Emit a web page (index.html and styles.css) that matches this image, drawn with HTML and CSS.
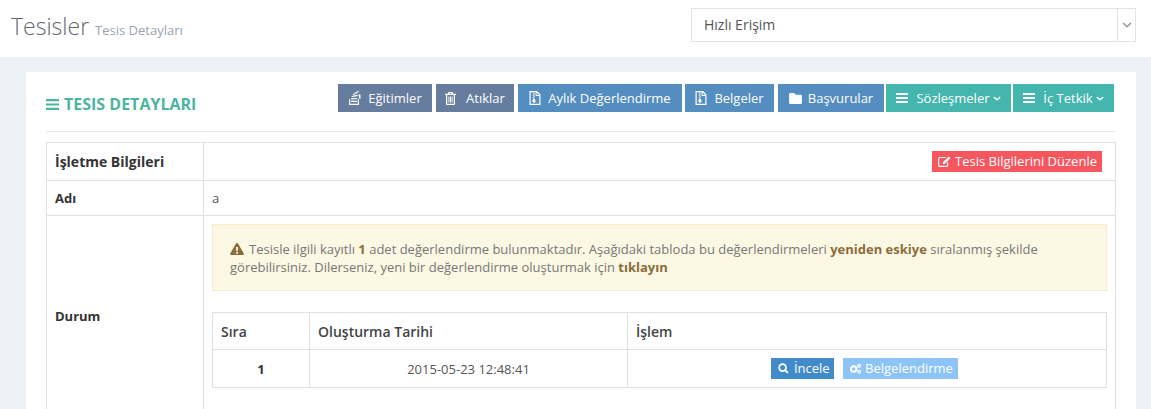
FILE: index.html
```html
<!DOCTYPE html>
<html lang="tr">
<head>
<meta charset="utf-8">
<title>Tesisler</title>
<link rel="stylesheet" href="styles.css">
</head>
<body>
<svg class="defs" width="0" height="0" aria-hidden="true">
  <symbol id="bars" viewBox="0 0 12 10"><path d="M0 0h12v2H0zM0 4h12v2H0zM0 8h12v2H0z"/></symbol>
  <symbol id="file" viewBox="0 0 12 14"><path fill-rule="evenodd" d="M.5 0h7.500l3.500 3.500V14H.5zM1.700 1.200v11.600h8.600V5H6.600V1.200zM7.600 1.400V4h2.600zM3.800 1.400h1.100v1.100H3.800zM4.900 2.500H6v1.100H4.900zM3.800 3.600h1.100v1.100H3.800zM4.900 4.700H6v1.100H4.900zM3.800 5.800h1.100v1.100H3.800zM3.900 7.500h2.100l.6 3.200-1.650 1.300-1.650-1.300z"/></symbol>
  <symbol id="chev" viewBox="0 0 10 6"><path d="M1 1l4 3.600L9 1" fill="none" stroke="currentColor" stroke-width="1.600"/></symbol>
</svg>
<header class="topbar">
  <h1 class="page-title">Tesisler <small class="page-sub">Tesis Detayları</small></h1>
  <div class="quick">
    <span class="quick-text">Hızlı Erişim</span>
    <span class="quick-arrow"><svg class="quick-chev"><use href="#chev"/></svg></span>
  </div>
</header>
<main class="content">
  <section class="card">
    <div class="card-head">
      <h2 class="card-title"><svg class="title-icon"><use href="#bars"/></svg>TESIS DETAYLARI</h2>
      <div class="toolbar">
        <a class="btn slate w-egitim">
          <svg class="ic ic-stack" viewBox="0 0 13 14"><path fill-rule="evenodd" d="M1 8h1.200v4.800h7.600V8H11v6H1zM3 9.800h6V11H3zM3.100 7.300l6-.4.100 1.200-6 .4zM3.600 5l5.800-1.200.3 1.200-5.800 1.200zM4.800 3l5.300-2.300.5 1.100-5.300 2.300zM6.800 1.300L10.500 0l.5 1-3.800 1.400zM10.500 3.500l1.800-.3.400 4.300-1.500.2z"/></svg>Eğitimler</a>
        <a class="btn slate w-atik">
          <svg class="ic ic-trash" viewBox="0 0 11 13"><path fill-rule="evenodd" d="M3.500 0h4l.8 1.800H11V3H10v9a1 1 0 0 1-1 1H2a1 1 0 0 1-1-1V3H0V1.800h2.700zM4.600 1.100l-.3.700h2.400l-.3-.7zM2.200 3v8.800h6.600V3zM3.400 4.500h1v6h-1zM5 4.500h1v6H5zM6.600 4.500h1v6h-1z"/></svg>Atıklar</a>
        <a class="btn blue w-aylik"><svg class="ic ic-file"><use href="#file"/></svg>Aylık Değerlendirme</a>
        <a class="btn blue w-belge"><svg class="ic ic-file"><use href="#file"/></svg>Belgeler</a>
        <a class="btn blue w-basvuru">
          <svg class="ic ic-folder" viewBox="0 0 14 12"><path d="M1.500 0h4l1.500 1.800h5.500A1.500 1.500 0 0 1 14 3.300v7.200a1.500 1.500 0 0 1-1.500 1.500h-11A1.500 1.500 0 0 1 0 10.500v-9A1.500 1.500 0 0 1 1.500 0z"/></svg>Başvurular</a>
        <a class="btn teal w-sozlesme"><svg class="ic ic-bars"><use href="#bars"/></svg>Sözleşmeler<svg class="chev"><use href="#chev"/></svg></a>
        <a class="btn teal w-tetkik"><svg class="ic ic-bars"><use href="#bars"/></svg>İç Tetkik<svg class="chev"><use href="#chev"/></svg></a>
      </div>
    </div>
    <table class="detail">
      <tr class="row-info">
        <th class="key info-key">İşletme Bilgileri</th>
        <td class="val-right">
          <a class="mini red">
            <svg class="mini-ic" viewBox="0 0 14 12"><path d="M2 1h7L7.800 2.200H2.300a1 1 0 0 0-1 1v6.500a1 1 0 0 0 1 1h6.500a1 1 0 0 0 1-1V7.500L11 6.300v3.700A2 2 0 0 1 9 12H2a2 2 0 0 1-2-2V3a2 2 0 0 1 2-2zM11.500.5l2 2L7.500 8.500l-2.500.500.500-2.500z"/></svg>Tesis Bilgilerini Düzenle</a>
        </td>
      </tr>
      <tr class="row-name">
        <th class="key">Adı</th>
        <td>a</td>
      </tr>
      <tr>
        <th class="key">Durum</th>
        <td class="status">
          <div class="alert">
            <svg class="warn" viewBox="0 0 14 12"><path fill-rule="evenodd" d="M7 0c.5 0 .8.300 1 .6l5.800 10c.4.700-.1 1.400-.8 1.400H1c-.7 0-1.200-.7-.8-1.400L6 .6C6.200.3 6.500 0 7 0zM6 4l.2 4h1.600L8 4zM6.100 9v1.700h1.800V9z"/></svg>Tesisle ilgili kayıtlı <b>1</b> adet değerlendirme bulunmaktadır. Aşağıdaki tabloda bu değerlendirmeleri <b>yeniden eskiye</b> sıralanmış şekilde görebilirsiniz. Dilerseniz, yeni bir değerlendirme oluşturmak için <b>tıklayın</b>
          </div>
          <table class="inner">
            <tr class="inner-head">
              <th class="c1">Sıra</th>
              <th class="c2">Oluşturma Tarihi</th>
              <th>İşlem</th>
            </tr>
            <tr class="inner-row">
              <td class="num">1</td>
              <td class="center">2015-05-23 12:48:41</td>
              <td class="center actions">
                <a class="mini dark">
                  <svg class="mini-ic search" viewBox="0 0 12 12"><circle cx="5" cy="5" r="3.800" fill="none" stroke="currentColor" stroke-width="1.800"/><path d="M7.500 7.500l3.300 3.300" stroke="currentColor" stroke-width="2.200"/></svg>İncele</a>
                <a class="mini light">
                  <svg class="mini-ic gears" viewBox="0 0 14 12"><circle cx="5" cy="6.500" r="3" fill="none" stroke="currentColor" stroke-width="2.200"/><circle cx="11" cy="3" r="1.500" fill="none" stroke="currentColor" stroke-width="1.300"/><circle cx="11" cy="9.500" r="1.500" fill="none" stroke="currentColor" stroke-width="1.300"/></svg>Belgelendirme</a>
              </td>
            </tr>
          </table>
        </td>
      </tr>
    </table>
  </section>
</main>
</body>
</html>
```
FILE: styles.css
```css
* { box-sizing: border-box; }
html, body { margin: 0; height: 409px; overflow: hidden; }
body {
  background: #eef1f6;
  font-family: "Open Sans", sans-serif;
  font-size: 13px;
  color: #58666e;
}
.defs { position: absolute; }
.topbar {
  height: 57px;
  background: #fff;
  display: flex;
  justify-content: space-between;
  padding: 8px 15px 0 11px;
}
.page-title {
  margin: 2px 0 0;
  font-size: 23px;
  line-height: 33px;
  font-weight: 300;
  color: #5f6771;
}
.page-sub { font-size: 13px; font-weight: 400; color: #9aa5b1; }
.quick {
  width: 445px;
  height: 34px;
  border: 1px solid #e2e5e8;
  display: flex;
  justify-content: space-between;
  align-items: center;
  padding-left: 12px;
  font-size: 14px;
  color: #555;
}
.quick-text { margin-top: -2px; }
.quick-arrow {
  width: 18px;
  height: 32px;
  border-left: 1px solid #e2e5e8;
  display: flex;
  align-items: center;
  justify-content: center;
}
.quick-chev { width: 10px; height: 6px; color: #999; }
.content { padding: 15px 15px 0 26px; }
.card { background: #fff; padding: 12px 20px 0; height: 340px; }
.card-head {
  display: flex;
  justify-content: space-between;
  height: 48px;
  border-bottom: 1px solid #e9ecef;
  margin-bottom: 10px;
}
.card-title {
  margin: 10px 0 0;
  height: 21px;
  font-size: 16px;
  line-height: 21px;
  font-weight: 700;
  color: #4cb5a1;
  display: flex;
  align-items: center;
}
.title-icon { width: 13px; height: 11px; margin-right: 5px; fill: #4cb5a1; }
.toolbar { display: flex; padding-right: 2px; height: 28px; }
.btn {
  height: 28px;
  display: flex;
  align-items: center;
  justify-content: center;
  color: #fff;
  font-size: 13px;
  font-weight: 400;
}
.btn.slate { background: #667d9f; margin-right: 4px; }
.btn.blue { background: #548dbf; margin-right: 3px; }
.btn.teal { background: #44b6ad; margin-right: 2px; }
.w-egitim { width: 94px; }
.w-atik { width: 78px; }
.w-aylik { width: 164px; }
.w-belge { width: 89px; margin-right: 4px !important; }
.w-basvuru { width: 106px; margin-right: 2px !important; }
.w-sozlesme { width: 125px; }
.w-tetkik { width: 101px; margin-right: 0 !important; }
.ic { fill: #fff; flex: none; }
.ic-stack { width: 13px; height: 14px; margin-right: 7px; }
.ic-trash { width: 11px; height: 13px; margin-right: 10px; }
.ic-file { width: 12px; height: 14px; margin-right: 7px; }
.ic-folder { width: 13px; height: 11px; margin-right: 6px; }
.ic-bars { width: 12px; height: 10px; margin-right: 8px; }
.chev { width: 8px; height: 5px; margin-left: 3px; color: #fff; }
.detail, .inner {
  border-collapse: collapse;
  width: 100%;
  table-layout: fixed;
}
.detail { width: 1070px; }
.detail th, .detail td {
  border: 1px solid #dfe2e5;
  padding: 0 8px;
}
.key {
  width: 157px;
  text-align: left;
  font-size: 13px;
  font-weight: 700;
  color: #333;
}
.info-key { font-size: 14px; }
.row-info { height: 38px; }
.row-name { height: 35px; }
.detail td { font-size: 13px; color: #555; }
.val-right { text-align: right; padding-right: 13px !important; }
.mini {
  display: inline-flex;
  align-items: center;
  height: 21px;
  padding: 0 4px 0 6px;
  color: #fff;
  font-size: 13px;
  line-height: 21px;
  vertical-align: middle;
}
.mini-ic { width: 13px; height: 11px; margin-right: 4px; fill: currentColor; }
.mini.red { background: #f6565e; width: 170px; }
.mini.dark { background: #428bca; margin-right: 6px; }
.mini.light { background: #8cc4f8; width: 115px; }
.search { margin-right: 4px; }
.gears { margin-right: 3px; }
.detail td.status { padding: 8px 8px 28px; }
.alert {
  height: 67px;
  padding: 15px 17px 0;
  background: #fcf8e3;
  border: 1px solid #faebcc;
  color: #777;
  font-size: 13px;
  line-height: 18px;
  margin-bottom: 21px;
}
.alert b { color: #8a6d3b; }
.warn { width: 14px; height: 12px; fill: #8a6d3b; margin-right: 5px; vertical-align: -1px; }
.detail .inner th, .detail .inner td { border: 1px solid #dfe2e5; }
.c1 { width: 97px; }
.c2 { width: 318px; }
.inner-head { height: 37px; }
.inner-head th {
  text-align: left;
  font-size: 14px;
  font-weight: 600;
  color: #444;
}
.inner-row { height: 38px; }
.center { text-align: center; }
.detail .inner td.num { text-align: center; color: #333; font-weight: 700; }
.detail .inner td.actions { white-space: nowrap; padding-right: 13px; }
```
